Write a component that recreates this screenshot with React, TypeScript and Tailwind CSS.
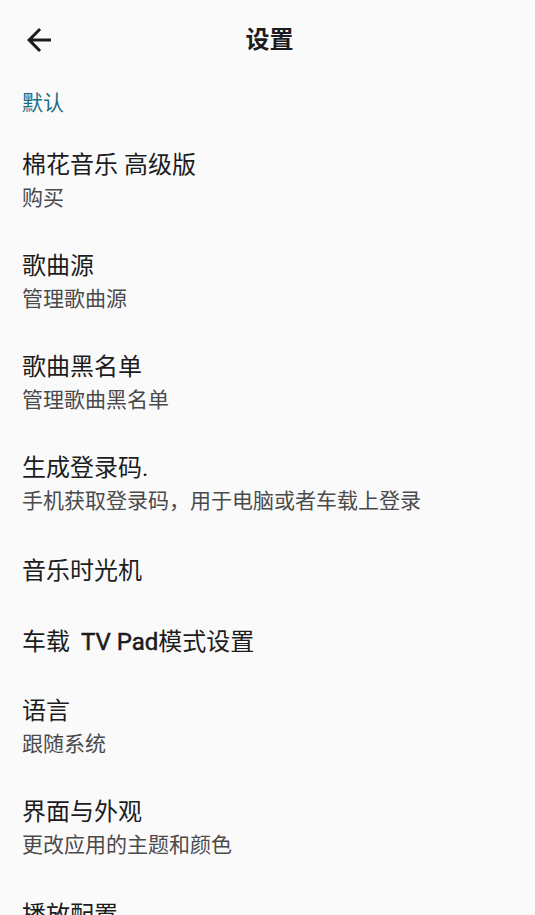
import type { ReactNode } from 'react';

type SettingItem = {
  title: ReactNode;
  summary?: string;
};

const items: SettingItem[] = [
  { title: '棉花音乐 高级版', summary: '购买' },
  { title: '歌曲源', summary: '管理歌曲源' },
  { title: '歌曲黑名单', summary: '管理歌曲黑名单' },
  { title: '生成登录码.', summary: '手机获取登录码，用于电脑或者车载上登录' },
  { title: '音乐时光机' },
  {
    title: (
      <>
        车载 <span className="ml-[5px] [-webkit-text-stroke:0.5px_#1c1c1e]">TV Pad</span>模式设置
      </>
    ),
  },
  { title: '语言', summary: '跟随系统' },
  { title: '界面与外观', summary: '更改应用的主题和颜色' },
  { title: '播放配置' },
];

function BackIcon() {
  return (
    <svg width="36" height="36" viewBox="0 0 24 24" fill="#1c1c1e" aria-hidden="true">
      <path d="M20 11H7.83l5.59-5.59L12 4l-8 8 8 8 1.41-1.41L7.83 13H20v-2z" />
    </svg>
  );
}

function SettingRow({ item }: { item: SettingItem }) {
  if (!item.summary) {
    return (
      <div className="flex min-h-[71px] flex-col justify-center px-[22px]">
        <p className="text-[24px] leading-[34px] text-[#1c1c1e]">{item.title}</p>
      </div>
    );
  }
  return (
    <div className="flex flex-col px-[22px] pt-[17px] pb-[18px]">
      <p className="text-[24px] leading-[34px] text-[#1c1c1e]">{item.title}</p>
      <p className="text-[21px] leading-[32px] text-[#4a4a4c]">{item.summary}</p>
    </div>
  );
}

export default function App() {
  return (
    <div
      className="h-[915px] w-[535px] overflow-hidden bg-[#fafafa]"
      style={{ fontFamily: 'Roboto, "Noto Sans CJK SC", sans-serif' }}
    >
      <header className="grid h-20 grid-cols-[1fr_auto_1fr] items-center">
        <button type="button" className="ml-[21px] flex h-9 w-9 items-center justify-center">
          <BackIcon />
        </button>
        <h1 className="pl-[4px] text-[24px] font-bold leading-[32px] text-[#1c1c1e]">设置</h1>
        <div />
      </header>
      <div className="px-[22px] pt-[8px] pb-[13px]">
        <p className="text-[21px] leading-[30px] text-[#1d6d86]">默认</p>
      </div>
      <div className="flex flex-col">
        {items.map((item, i) => (
          <SettingRow key={i} item={item} />
        ))}
      </div>
    </div>
  );
}
